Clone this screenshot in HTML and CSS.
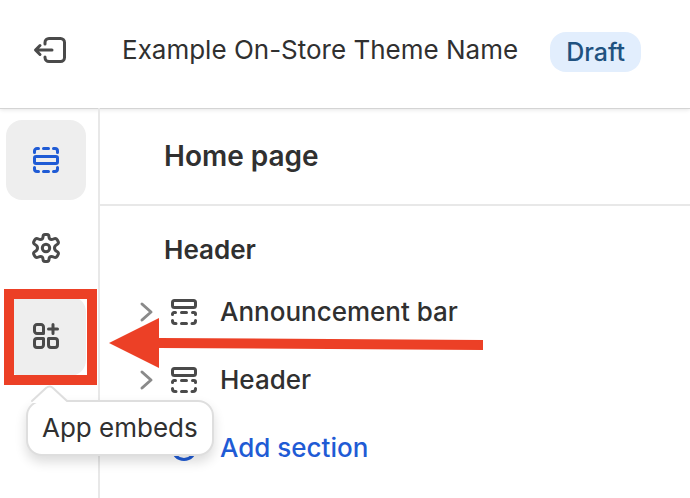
FILE: index.html
```html
<!DOCTYPE html>
<html lang="en">
<head>
    <meta charset="UTF-8">
    <meta name="viewport" content="width=device-width, initial-scale=1.0">
    <title>Theme editor</title>
    <link rel="stylesheet" href="styles.css">
</head>
<body>

    <header class="topbar">
        <button class="exit-button" type="button" aria-label="Exit">
            <svg width="32" height="26" viewBox="0 0 32 26">
                <path d="M11 7V5.500a4 4 0 0 1 4-4h11.500a4 4 0 0 1 4 4v15a4 4 0 0 1-4 4H15a4 4 0 0 1-4-4V20M18 13H2M6 8.500L1.500 13L6 17.500"/>
            </svg>
        </button>
        <span class="theme-name">Example On-Store Theme Name</span>
        <span class="badge">Draft</span>
    </header>

    <div class="editor">
        <nav class="sidebar">
            <button class="nav-button active" type="button" aria-label="Sections">
                <svg width="26" height="26" viewBox="0 0 26 26">
                    <rect x="1.500" y="9.500" width="23" height="7" rx="1.500"/>
                    <path d="M1.500 5.500V4a2.500 2.500 0 0 1 2.500-2.500h1.500M10.500 1.500h5M20.500 1.500H22A2.500 2.500 0 0 1 24.500 4v1.500M1.500 20.500V22A2.500 2.500 0 0 0 4 24.500h1.500M10.500 24.500h5M20.500 24.500H22a2.500 2.500 0 0 0 2.500-2.500v-1.500"/>
                </svg>
            </button>
            <button class="nav-button" type="button" aria-label="Theme settings">
                <svg width="30" height="30" viewBox="0 0 30 30">
                    <path d="M12 4Q12 1.500 14 1.500H16Q18 1.500 18 4Q18.200 6.500 20.500 6.500Q21.500 6.500 22.500 6Q25 4.800 26.200 6.800L27 8.200Q28.200 10.200 26 11.500Q23.500 12.800 23.500 15T26 18.500Q28.200 19.800 27 21.800L26.200 23.200Q25 25.200 22.500 24Q21.500 23.500 20.500 23.500Q18.200 23.500 18 26Q18 28.500 16 28.500H14Q12 28.500 12 26Q11.800 23.500 9.500 23.500Q8.500 23.500 7.500 24Q5 25.200 3.800 23.200L3 21.800Q1.800 19.800 4 18.500Q6.500 17.200 6.500 15T4 11.500Q1.800 10.200 3 8.200L3.800 6.800Q5 4.800 7.500 6Q8.500 6.500 9.500 6.500Q11.800 6.500 12 4Z"/>
                    <circle cx="15" cy="15" r="3.700"/>
                </svg>
            </button>
            <div class="nav-item">
                <button class="nav-button active dark" type="button" aria-label="App embeds" aria-describedby="tip">
                    <svg width="26" height="26" viewBox="0 0 26 26">
                        <path d="M4 1.500h4A2.500 2.500 0 0 1 10.500 4v6.500H4A2.500 2.500 0 0 1 1.500 8V4A2.500 2.500 0 0 1 4 1.500ZM4 15.500h6.500V22A2.500 2.500 0 0 1 8 24.500H4A2.500 2.500 0 0 1 1.500 22v-4A2.500 2.500 0 0 1 4 15.500ZM15.500 15.500H22a2.500 2.500 0 0 1 2.500 2.500v4a2.500 2.500 0 0 1-2.500 2.500h-4a2.500 2.500 0 0 1-2.500-2.500ZM20 1.500v9M15.500 6h9"/>
                    </svg>
                </button>
                <div class="highlight"></div>
                <svg class="arrow" width="374" height="50" viewBox="0 0 374 50">
                    <path d="M0 25L50 0V20L374 22V32L50 30V50Z"/>
                </svg>
                <div class="tooltip" id="tip" role="tooltip">
                    <svg class="tooltip-tip" width="38" height="18" viewBox="0 0 38 18">
                        <path class="tip-fill" d="M1 18V16L15 3Q19 0 22 3L36 16V18Z"/>
                        <path class="tip-edge" d="M1 16L15 3Q19 0 22 3L36 16"/>
                    </svg>
                    App embeds
                </div>
            </div>
        </nav>

        <main class="panel">
            <h1 class="page-title">Home page</h1>
            <section class="group">
                <h2 class="group-title">Header</h2>
                <button class="row" type="button">
                    <svg class="chevron" width="14" height="20" viewBox="0 0 14 20">
                        <path d="M2 2L11 10L2 18"/>
                    </svg>
                    <svg width="26" height="26" viewBox="0 0 26 26">
                        <rect x="1.500" y="1.500" width="23" height="7" rx="2"/>
                        <path d="M1.500 15.500V15A1.500 1.500 0 0 1 3 13.500h1.500M10.500 13.500h5M21.500 13.500H23A1.500 1.500 0 0 1 24.500 15v.500M1.500 21.500V22A2.500 2.500 0 0 0 4 24.500h1M10.500 24.500h5M21 24.500h1a2.500 2.500 0 0 0 2.500-2.500v-.500"/>
                    </svg>
                    <span>Announcement bar</span>
                </button>
                <button class="row" type="button">
                    <svg class="chevron" width="14" height="20" viewBox="0 0 14 20">
                        <path d="M2 2L11 10L2 18"/>
                    </svg>
                    <svg width="26" height="26" viewBox="0 0 26 26">
                        <rect x="1.500" y="1.500" width="23" height="7" rx="2"/>
                        <path d="M1.500 15.500V15A1.500 1.500 0 0 1 3 13.500h1.500M10.500 13.500h5M21.500 13.500H23A1.500 1.500 0 0 1 24.500 15v.500M1.500 21.500V22A2.500 2.500 0 0 0 4 24.500h1M10.500 24.500h5M21 24.500h1a2.500 2.500 0 0 0 2.500-2.500v-.500"/>
                    </svg>
                    <span>Header</span>
                </button>
                <button class="row add" type="button">
                    <svg width="26" height="26" viewBox="0 0 26 26">
                        <circle cx="13" cy="13" r="11.500"/>
                        <path d="M13 8v10M8 13h10"/>
                    </svg>
                    <span>Add section</span>
                </button>
            </section>
        </main>
    </div>

</body>
</html>
```
FILE: styles.css
```css
* {
    box-sizing: border-box;
}

body {
    margin: 0;
    min-height: 100vh;
    display: flex;
    flex-direction: column;
    background: #fff;
    color: #303030;
    font-family: Inter, sans-serif;
    font-size: 26px;
    line-height: 32px;
}

button {
    border: none;
    background: none;
    padding: 0;
    color: inherit;
    font: inherit;
    cursor: pointer;
}

svg {
    display: block;
    flex: none;
    overflow: visible;
    fill: none;
    stroke: #4a4a4a;
    stroke-width: 3;
    stroke-linecap: round;
    stroke-linejoin: round;
}

.topbar {
    display: flex;
    align-items: center;
    height: 108px;
    padding: 0 34px 8px;
    box-shadow: 0 1px 0 #d4d4d4, 0 2px 4px rgba(0, 0, 0, 0.1);
}

.exit-button {
    margin-right: 56px;
}

.badge {
    margin: 4px 0 0 32px;
    padding: 4px 16px;
    border-radius: 16px;
    background: #e2eefd;
    color: #1f5280;
    font-size: 25px;
    font-weight: 500;
}

.editor {
    flex: 1;
    display: flex;
}

.sidebar {
    width: 100px;
    padding: 12px 0 0 6px;
    border-right: 2px solid #e8e8e8;
    display: flex;
    flex-direction: column;
    gap: 8px;
}

.nav-item {
    position: relative;
    width: 80px;
}

.nav-button {
    display: flex;
    align-items: center;
    justify-content: center;
    width: 80px;
    height: 80px;
    border-radius: 16px;
}

.nav-button.active {
    background: #eee;
}

.nav-button.active svg {
    stroke: #1f5bd5;
}

.nav-button.dark svg {
    stroke: #4a4a4a;
}

/* callout drawn over the app embeds button */
.highlight {
    position: absolute;
    top: -7px;
    left: -2px;
    width: 93px;
    height: 96px;
    border: 10px solid #ec4026;
}

.arrow {
    position: absolute;
    top: 22px;
    left: 103px;
    fill: #ec4026;
    stroke: none;
}

.tooltip {
    position: absolute;
    top: 104px;
    left: 20px;
    padding: 10px 14px;
    border: 2px solid #dedede;
    border-radius: 16px;
    background: #fff;
    box-shadow: 0 6px 12px rgba(0, 0, 0, 0.14);
    white-space: nowrap;
}

.tooltip-tip {
    position: absolute;
    top: -17px;
    left: 3px;
}

.tip-fill {
    fill: #fff;
    stroke: none;
}

.tip-edge {
    stroke: #dedede;
    stroke-width: 2;
}

.panel {
    flex: 1;
}

.page-title {
    margin: 0;
    padding: 32px 64px;
    border-bottom: 2px solid #e8e8e8;
    font-size: 28px;
    font-weight: 600;
}

.group {
    padding: 28px 40px;
}

.group-title {
    margin: 0;
    padding: 0 24px 12px;
    font-size: 26px;
    font-weight: 600;
}

.row {
    display: flex;
    align-items: center;
    width: 100%;
    height: 68px;
    font-weight: 500;
}

.row svg {
    margin-right: 23px;
}

.row .chevron {
    margin-right: 17px;
    stroke: #8a8a8a;
}

.add {
    padding-left: 31px;
    color: #1f5bd5;
}

.add svg {
    stroke: #1f5bd5;
}
```
